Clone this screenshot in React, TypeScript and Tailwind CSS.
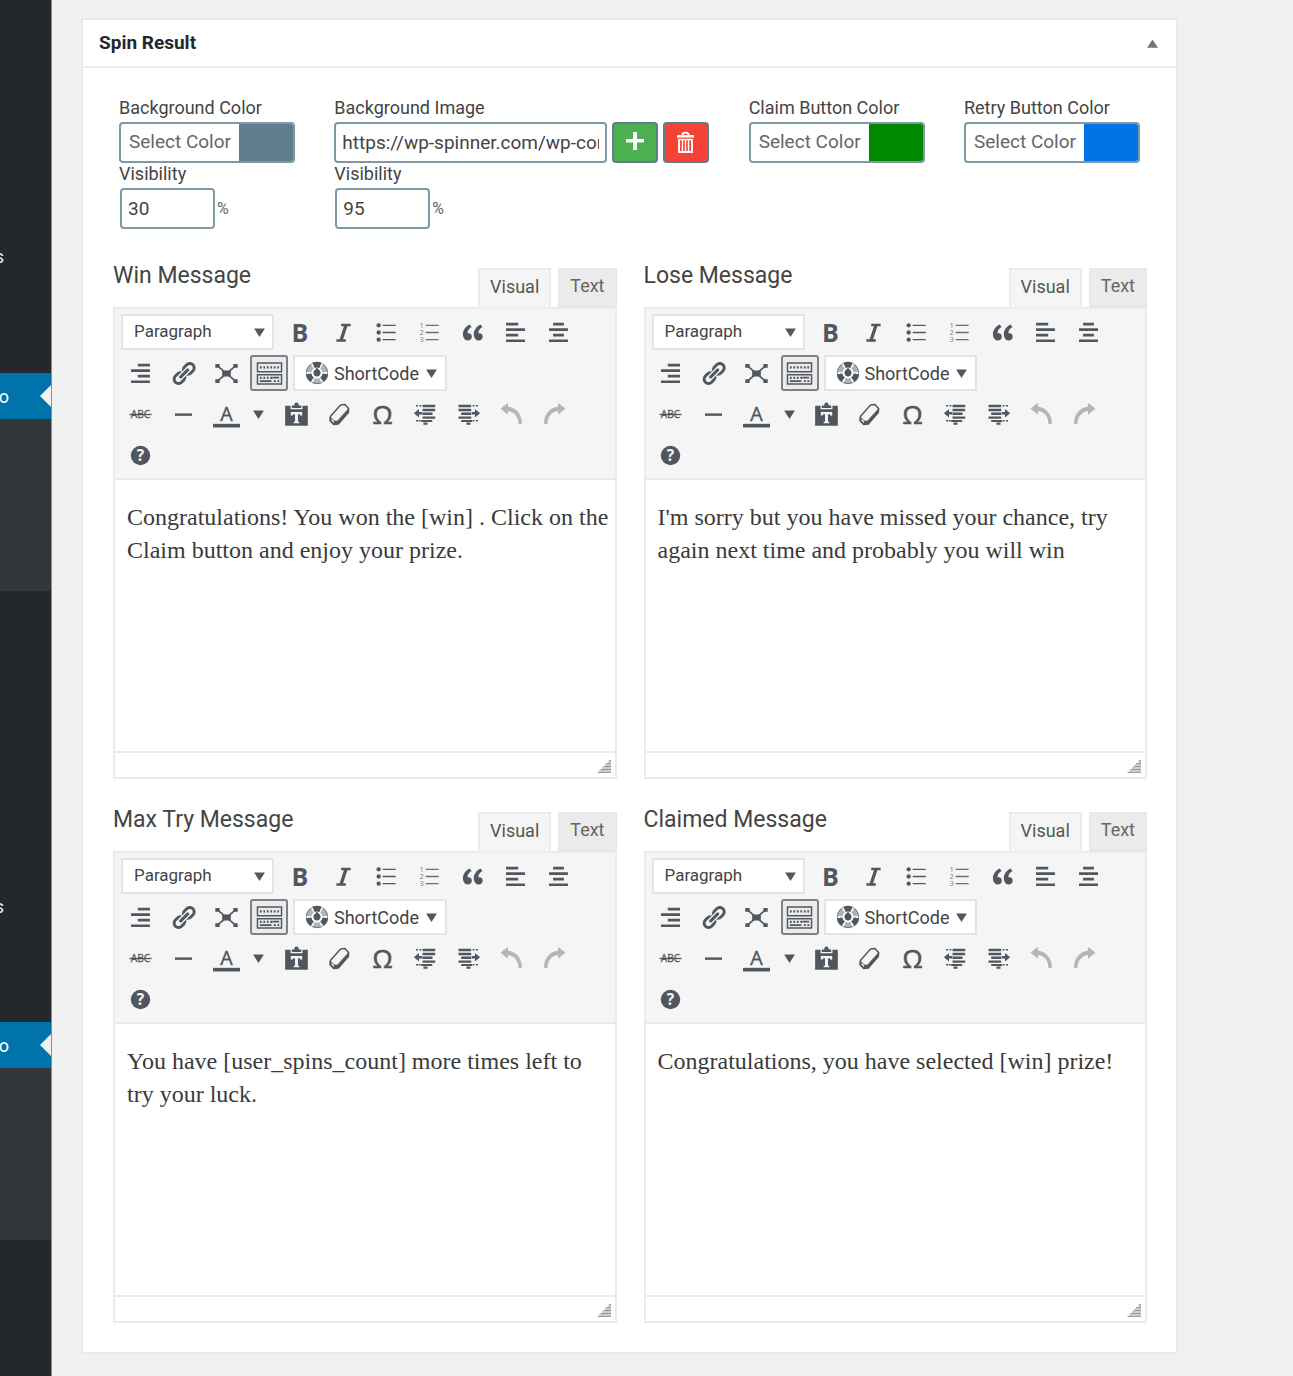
import type { ReactNode } from "react";

function Icon({ children, className = "size-[27px]" }: { children: ReactNode; className?: string }) {
  return (
    <svg viewBox="0 0 20 20" className={className} fill="currentColor" aria-hidden="true">
      {children}
    </svg>
  );
}

const wheelSlices = [0, 60, 120, 180, 240, 300];

const icons = {
  italic: (
    <g fill="none" stroke="currentColor" strokeWidth="2">
      <path d="M8.3 4.4h7M4.7 15.9h7" strokeWidth="1.8" />
      <path d="M11.9 4.5L8.2 15.8" strokeWidth="2.4" />
    </g>
  ),
  bullets: (
    <>
      <circle cx="4.2" cy="4.7" r="1.6" />
      <circle cx="4.2" cy="10" r="1.6" />
      <circle cx="4.2" cy="15.3" r="1.6" />
      <path d="M7.2 4.2h9.6v1H7.2zM7.2 9.5h9.6v1H7.2zM7.2 14.8h9.6v1H7.2z" />
    </>
  ),
  numbers: (
    <g opacity="0.85">
      <text x="2.8" y="6.4" fontSize="5" className="font-['Open_Sans']">1</text>
      <text x="2.8" y="11.8" fontSize="5" className="font-['Open_Sans']">2</text>
      <text x="2.8" y="17.2" fontSize="5" className="font-['Open_Sans']">3</text>
      <path d="M7.2 4.2h9.6v1H7.2zM7.2 9.5h9.6v1H7.2zM7.2 14.8h9.6v1H7.2z" />
    </g>
  ),
  quote: (
    <path d="M9.49 13.22c0-.74-.2-1.38-.61-1.9-.62-.78-1.83-.88-2.53-.72-.29-1.65 1.11-3.75 2.92-4.65L7.88 4c-2.73 1.3-5.42 4.28-4.96 8.05C3.21 14.43 4.59 16 6.54 16c.85 0 1.56-.25 2.12-.75s.83-1.18.83-2.03zm8.05 0c0-.74-.2-1.38-.61-1.9-.63-.78-1.83-.88-2.53-.72-.29-1.65 1.11-3.75 2.92-4.65L15.93 4c-2.73 1.3-5.41 4.28-4.95 8.05.29 2.38 1.66 3.95 3.61 3.95.85 0 1.56-.25 2.12-.75s.83-1.18.83-2.03z" />
  ),
  left: <path d="M12 4.8V2.8H3v2zM17 8.9v-2H3v2zM12 13v-2H3v2zM17 17.1v-2H3v2z" />,
  center: <path d="M14 4.8v-2H6v2zM17 8.9v-2H3v2zM14 13v-2H6v2zM17 17.1v-2H3v2z" />,
  right: <path d="M17 4.8v-2H8v2zM17 8.9v-2H3v2zM17 13v-2H8v2zM17 17.1v-2H3v2z" />,
  link: (
    <path d="M17.74 2.76c1.68 1.69 1.68 4.41 0 6.1l-1.53 1.52c-1.12 1.12-2.7 1.47-4.14 1.09l2.62-2.61.76-.77.76-.76c.84-.84.84-2.2 0-3.04-.84-.85-2.2-.85-3.04 0l-.77.76-3.38 3.38c-.37-1.44-.02-3.02 1.1-4.14l1.52-1.53c1.69-1.68 4.42-1.68 6.1 0zM8.59 13.43l5.34-5.34c.42-.42.42-1.1 0-1.52-.44-.43-1.13-.39-1.53 0l-5.33 5.34c-.42.42-.42 1.1 0 1.52.44.43 1.13.39 1.52 0zm-.76 2.29l4.14-4.15c.38 1.44.03 3.02-1.09 4.14l-1.52 1.53c-1.69 1.68-4.41 1.68-6.1 0-1.68-1.68-1.68-4.42 0-6.1l1.53-1.52c1.12-1.12 2.7-1.47 4.14-1.1l-4.14 4.15c-.85.84-.85 2.2 0 3.05.84.84 2.2.84 3.04 0z" />
  ),
  focus: (
    <>
      <path d="M6.8 7.7h6.4v4.6H6.8zM1.7 2.9h3.2v2.8H1.7zM15.1 2.9h3.2v2.8h-3.2zM1.7 14.3h3.2v2.8H1.7zM15.1 14.3h3.2v2.8h-3.2z" />
      <path d="M3.5 4.5l13 11M16.5 4.5l-13 11" stroke="currentColor" strokeWidth="1.2" />
    </>
  ),
  keyboard: (
    <>
      <path d="M1.7 2.7h16.6v6.1H1.7zM1.7 10.8h16.6v6.5H1.7z" fill="none" stroke="currentColor" strokeWidth="1" />
      <path d="M3.4 5.8h13.2" stroke="currentColor" strokeWidth="1.5" strokeDasharray="1.2 1.2" />
      <path d="M3.4 13h8.4" stroke="currentColor" strokeWidth="1.5" strokeDasharray="1.2 1.2" />
      <path d="M12 12.3h4.6v1.2H12zM3.4 14.7h8v1.2h-8zM13 14.7h1.4v1.2H13zM15.4 14.7h1.4v1.2h-1.4z" />
    </>
  ),
  wheel: (
    <>
      <circle cx="10" cy="10" r="8.9" fill="none" stroke="currentColor" strokeWidth=".7" opacity=".7" />
      {wheelSlices.map((angle, i) => (
        <path
          key={angle}
          d="M8 5.8L6.2 1.5A9.3 9.3 0 0 1 13.8 1.5L12 5.8A4.7 4.7 0 0 0 8 5.8z"
          transform={`rotate(${angle} 10 10)`}
          opacity={i % 2 === 0 ? 1 : 0.45}
        />
      ))}
      <path d="M10 5.4l1.5 1.9a3 3 0 1 1-3 0z" />
    </>
  ),
  strike: (
    <>
      <text x="10" y="12.7" textAnchor="middle" fontSize="7.6" stroke="currentColor" strokeWidth=".2" className="font-['Open_Sans']">ABC</text>
      <path d="M1.8 9.5h16.4v1H1.8z" />
    </>
  ),
  line: <path d="M3.7 9.2h12.6V11H3.7z" />,
  color: (
    <>
      <text x="10" y="14.8" textAnchor="middle" fontSize="14.6" stroke="currentColor" strokeWidth=".3" className="font-['Open_Sans']">A</text>
      <path d="M0 16.9h20v2.7H0z" />
    </>
  ),
  paste: (
    <>
      <path
        fillRule="evenodd"
        d="M1.6 3.5h4v2.6h8.8V3.5h4v14.8H1.6zM5.8 8.2v2.6h1.4l.4-.9h1.3v5.2l-1 .5v.9h4.2v-.9l-1-.5V9.9h1.3l.4.9h1.4V8.2z"
      />
      <path d="M6.5 5.2V3.4h1.7L8.6 2Q9 1.2 10 1.2t1.4.8l.4 1.4h1.7v1.8z" />
    </>
  ),
  eraser: (
    <>
      <path d="M10.8 3L14 2.6l2.8 3.1-.3 2.9-7.4 8.5-3.5.4-2.700-3 .3-3z" fill="none" stroke="currentColor" strokeWidth="1.1" strokeLinejoin="round" />
      <path d="M3.2 11.5l2.9 3 2.3.1 8.3-9.200.1 3.2-7.700 8.5-3.5.4-2.700-3z" />
      <path d="M4.2 13.2l1.6 1.7v1.5l-1.700-1.900z" fill="#f5f5f5" />
    </>
  ),
  omega: (
    <text x="10" y="17" textAnchor="middle" fontSize="19" stroke="currentColor" strokeWidth=".5" className="font-['Open_Sans']">Ω</text>
  ),
  outdent: (
    <>
      <path d="M7.8 2.8h9.4v1.9H7.8zM7.8 5.7h9.4v1.9H7.8zM7.8 8.6h7.4v1.8H7.8zM7.8 11.4h9.4v1.8H7.8zM6.8 14.1h8.2v1.4H6.8zM8.5 16h3v1.5h-3z" />
      <path d="M5.2 5.9v2.2h2.4v1.9H5.2v2.3L1.4 9z" />
      <path d="M3 3.5h1.5M5.5 3.5H7M3 14.6h1.5M5 14.6h1.5" stroke="currentColor" strokeWidth="1" />
    </>
  ),
  indent: (
    <>
      <path d="M2.6 2.8H12v1.9H2.6zM2.6 5.7H12v1.9H2.6zM4.6 8.6H12v1.8H4.6zM2.6 11.4H12v1.8H2.6zM4.6 14.1h8.2v1.4H4.6zM8.5 16h3v1.5h-3z" />
      <path d="M14.8 5.9v2.2h-2.4v1.9h2.4v2.3l3.8-3.3z" />
      <path d="M13 3.5h1.5M15.5 3.5H17M13.2 14.6h1.3M15.5 14.6H17" stroke="currentColor" strokeWidth="1" />
    </>
  ),
  undo: (
    <g opacity="0.4">
      <path d="M1.8 5.6l5.6-4.2v2.9c5.7.6 10.4 4.9 10.3 12.6l-2.5.3c.1-5.7-3.3-9.2-7.8-9.8v2.8z" />
    </g>
  ),
  redo: (
    <g opacity="0.4">
      <path d="M18.2 5.6l-5.6-4.2v2.9C6.9 4.9 2.2 9.2 2.3 16.9l2.5.3c-.1-5.7 3.3-9.2 7.8-9.8v2.8z" />
    </g>
  ),
  help: (
    <>
      <circle cx="10" cy="10" r="7.2" />
      <text x="10" y="14.2" textAnchor="middle" fontSize="11.5" fontWeight="700" fill="#f5f5f5" className="font-['Open_Sans']">?</text>
    </>
  ),
};

function Caret() {
  return (
    <svg viewBox="0 0 12 10" className="h-[9px] w-[11px] shrink-0" fill="currentColor" aria-hidden="true">
      <path d="M0 0.5h12L6 10z" />
    </svg>
  );
}

function Tool({ label, children, active = false }: { label: string; children: ReactNode; active?: boolean }) {
  return (
    <button
      type="button"
      aria-label={label}
      title={label}
      className={
        active
          ? "flex h-9 w-[38px] items-center justify-center rounded-[3px] border-2 border-[#7b8188] bg-[#ebebeb]"
          : "flex h-9 w-[38px] items-center justify-center"
      }
    >
      {children}
    </button>
  );
}

function Editor({ id, title, text }: { id: string; title: string; text: string }) {
  return (
    <section>
      <div className="flex items-start justify-between">
        <h3 className="-mt-2 text-[23px] leading-8 text-[#444]">
          <label htmlFor={id}>{title}</label>
        </h3>
        <div className="relative -mb-px flex gap-[7px] text-[18px] leading-6">
          <button type="button" className="h-10 border-2 border-b-0 border-[#ebebeb] bg-[#f5f5f5] px-[10px] pb-1 text-[#555]">
            Visual
          </button>
          <button type="button" className="h-[39px] border border-[#e5e5e5] bg-[#ebebeb] px-[11px] pb-1 text-[#666]">
            Text
          </button>
        </div>
      </div>
      <div className="border-2 border-[#ebebeb]">
        <div className="flex flex-col gap-[5px] border-b-2 border-[#e8e8e8] bg-[#f5f5f5] px-1.5 py-[5px] text-[#50575e]">
          <div className="flex flex-wrap gap-[5px]">
            <div className="relative mr-[2px] flex h-9 w-[153px] items-center">
              <select
                aria-label="Text format"
                className="h-full w-full appearance-none border-2 border-[#e3e4e5] bg-white pl-[11px] text-[17px] text-[#444]"
              >
                <option>Paragraph</option>
              </select>
              <span className="pointer-events-none absolute right-[9px]">
                <Caret />
              </span>
            </div>
            <Tool label="Bold">
              <span className="font-['Open_Sans',sans-serif] text-[25px] leading-9 font-bold">B</span>
            </Tool>
            <Tool label="Italic"><Icon>{icons.italic}</Icon></Tool>
            <Tool label="Bulleted list"><Icon>{icons.bullets}</Icon></Tool>
            <Tool label="Numbered list"><Icon>{icons.numbers}</Icon></Tool>
            <Tool label="Blockquote"><Icon>{icons.quote}</Icon></Tool>
            <Tool label="Align left"><Icon>{icons.left}</Icon></Tool>
            <Tool label="Align center"><Icon>{icons.center}</Icon></Tool>
            <Tool label="Align right"><Icon>{icons.right}</Icon></Tool>
            <Tool label="Insert link"><Icon>{icons.link}</Icon></Tool>
            <Tool label="Distraction-free writing"><Icon>{icons.focus}</Icon></Tool>
            <Tool label="Toolbar toggle" active><Icon className="size-[29px] shrink-0">{icons.keyboard}</Icon></Tool>
            <button
              type="button"
              className="flex h-9 items-center gap-[5px] border-2 border-[#e3e4e5] bg-white pr-2 pl-[10px] text-[18px] text-[#444]"
            >
              <Icon className="size-6 text-[#50575e]">{icons.wheel}</Icon>
              ShortCode
              <span className="ml-0.5 text-[#50575e]"><Caret /></span>
            </button>
          </div>
          <div className="flex flex-wrap gap-[5px]">
            <Tool label="Strikethrough"><Icon>{icons.strike}</Icon></Tool>
            <Tool label="Horizontal line"><Icon>{icons.line}</Icon></Tool>
            <div className="flex">
              <Tool label="Text color"><Icon>{icons.color}</Icon></Tool>
              <button type="button" aria-label="Choose text color" className="flex h-9 w-[27px] items-center justify-center">
                <Caret />
              </button>
            </div>
            <Tool label="Paste as text"><Icon>{icons.paste}</Icon></Tool>
            <Tool label="Clear formatting"><Icon>{icons.eraser}</Icon></Tool>
            <Tool label="Special character"><Icon>{icons.omega}</Icon></Tool>
            <Tool label="Decrease indent"><Icon>{icons.outdent}</Icon></Tool>
            <Tool label="Increase indent"><Icon>{icons.indent}</Icon></Tool>
            <Tool label="Undo"><Icon>{icons.undo}</Icon></Tool>
            <Tool label="Redo"><Icon>{icons.redo}</Icon></Tool>
            <Tool label="Keyboard shortcuts"><Icon>{icons.help}</Icon></Tool>
          </div>
        </div>
        <textarea
          id={id}
          defaultValue={text}
          className="block h-[271px] w-full resize-none bg-white pt-[21px] pr-1 pl-3 font-['Liberation_Serif',serif] text-[24px] leading-[33px] text-[#3a3a3a]"
        />
        <div className="flex h-[26px] items-end justify-end border-t-2 border-[#ebebeb] pr-1 pb-[3px]">
          <svg viewBox="0 0 14 14" className="size-[14px]" stroke="#999ba0" strokeWidth="1" aria-hidden="true">
            <path d="M12 .5h2M9 3.5h5M6.5 6.5h7.5M3.5 9.5H14M.5 12.5H14M11 2h3M8 5h6M5 8h9M2 11h12" />
          </svg>
        </div>
      </div>
    </section>
  );
}

function ColorField({ label, swatch }: { label: string; swatch: string }) {
  return (
    <div className="flex flex-col items-start">
      <span className="leading-7">{label}</span>
      <button
        type="button"
        aria-label={`${label}: Select Color`}
        className="flex h-[41px] w-[176px] overflow-hidden rounded-[4px] border-2 border-[#7e98a4] bg-white text-[19px] text-[#666]"
      >
        <span className="flex h-full flex-1 items-center justify-center">Select Color</span>
        <span className={swatch} />
      </button>
    </div>
  );
}

function Visibility({ id, value }: { id: string; value: string }) {
  return (
    <div>
      <label htmlFor={id} className="mb-1 block leading-[21px]">Visibility</label>
      <div className="ml-px flex items-center gap-0.5">
        <input
          id={id}
          defaultValue={value}
          className="h-[41px] w-[95px] rounded-[4px] border-2 border-[#7e98a4] bg-white px-1.5 text-[19px]"
        />
        <span className="text-base text-[#666]">%</span>
      </div>
    </div>
  );
}

function CurrentItem() {
  return (
    <>
      <a href="#current" className="relative flex h-[46px] items-center justify-end bg-[#0073aa] pr-[42px] text-white">
        o
        <span className="absolute right-0 border-y-[11px] border-r-[11px] border-y-transparent border-r-[#f1f1f1]" />
      </a>
      <div className="h-[172px] bg-[#32373c]" />
    </>
  );
}

export default function App() {
  return (
    <div className="flex min-h-screen bg-[#f1f1f1] font-[Roboto,sans-serif] text-[18px] text-[#444]">
      <nav aria-label="Admin menu" className="w-[52px] shrink-0 overflow-hidden border-r border-[#8b8e91] bg-[#23282d] text-[#eee]">
        <div className="flex h-[373px] items-end justify-end pr-[47px] pb-[102px]">
          <a href="#settings" className="leading-7">s</a>
        </div>
        <CurrentItem />
        <div className="flex h-[431px] items-end justify-end pr-[47px] pb-[101px]">
          <a href="#settings" className="leading-7">s</a>
        </div>
        <CurrentItem />
      </nav>
      <main className="min-w-0 flex-1 pt-[18px] pr-[115px] pb-[22px] pl-[29px]">
        <div className="border-2 border-[#e9e9e9] bg-white">
          <header className="flex h-12 items-center justify-between border-b-2 border-[#eee] pr-[18px] pl-4">
            <h2 className="text-[19px] leading-6 font-bold text-[#23282d]">Spin Result</h2>
            <button type="button" aria-label="Collapse panel" className="text-[#72777c]">
              <svg viewBox="0 0 12 9" className="h-[9px] w-[11px]" fill="currentColor" aria-hidden="true">
                <path d="M6 0l6 9H0z" />
              </svg>
            </button>
          </header>
          <div className="pt-[26px] pr-[29px] pb-[29px] pl-[30px]">
            <div className="flex items-start justify-between pr-[7px] pl-[6px]">
              <div>
                <ColorField label="Background Color" swatch="h-full w-[54px] bg-[#607d8b]" />
                <Visibility id="color-visibility" value="30" />
              </div>
              <div>
                <label htmlFor="background-image" className="block leading-7">Background Image</label>
                <div className="flex gap-[5px]">
                  <input
                    id="background-image"
                    defaultValue="https://wp-spinner.com/wp-content/uploads/background.png"
                    className="h-[41px] w-[273px] rounded-[4px] border-2 border-[#7e98a4] bg-white px-1.5 text-[19px]"
                  />
                  <button
                    type="button"
                    aria-label="Add image"
                    className="flex h-[41px] w-[46px] items-center justify-center rounded-[4px] border-2 border-[#607d8b] bg-[#4caf50] pb-1 text-white"
                  >
                    <svg viewBox="0 0 20 20" className="size-5" fill="currentColor" aria-hidden="true">
                      <path d="M8 1h4v7h7v3.6h-7V19H8v-7.4H1V8h7z" />
                    </svg>
                  </button>
                  <button
                    type="button"
                    aria-label="Remove image"
                    className="flex h-[41px] w-[46px] items-center justify-center rounded-[4px] border-2 border-[#607d8b] bg-[#f44336] pr-0.5 text-white"
                  >
                    <svg viewBox="0 0 20 24" className="h-[23px] w-[19px]" fill="none" stroke="currentColor" aria-hidden="true">
                      <path d="M1 5.5h18" strokeWidth="2.6" />
                      <path d="M6.5 4.5q0-3 3.5-3t3.5 3" strokeWidth="1.8" />
                      <path d="M3.2 8.8v13.2h13.6V8.8" strokeWidth="2" />
                      <path d="M2.2 8.9h15.6" strokeWidth="1.6" />
                      <path d="M6.8 8.5v13M10 8.5v13M13.2 8.5v13" strokeWidth="1.5" />
                    </svg>
                  </button>
                </div>
                <Visibility id="image-visibility" value="95" />
              </div>
              <ColorField label="Claim Button Color" swatch="h-full w-[54px] bg-[#008800]" />
              <ColorField label="Retry Button Color" swatch="h-full w-[54px] bg-[#0073e6]" />
            </div>
            <div className="mt-[39px] grid grid-cols-2 gap-x-[27px] gap-y-[33px]">
              <Editor id="win" title="Win Message" text="Congratulations! You won the [win] . Click on the Claim button and enjoy your prize." />
              <Editor id="lose" title="Lose Message" text="I'm sorry but you have missed your chance, try again next time and probably you will win" />
              <Editor id="max-try" title="Max Try Message" text="You have [user_spins_count] more times left to try your luck." />
              <Editor id="claimed" title="Claimed Message" text="Congratulations, you have selected [win] prize!" />
            </div>
          </div>
        </div>
      </main>
    </div>
  );
}
